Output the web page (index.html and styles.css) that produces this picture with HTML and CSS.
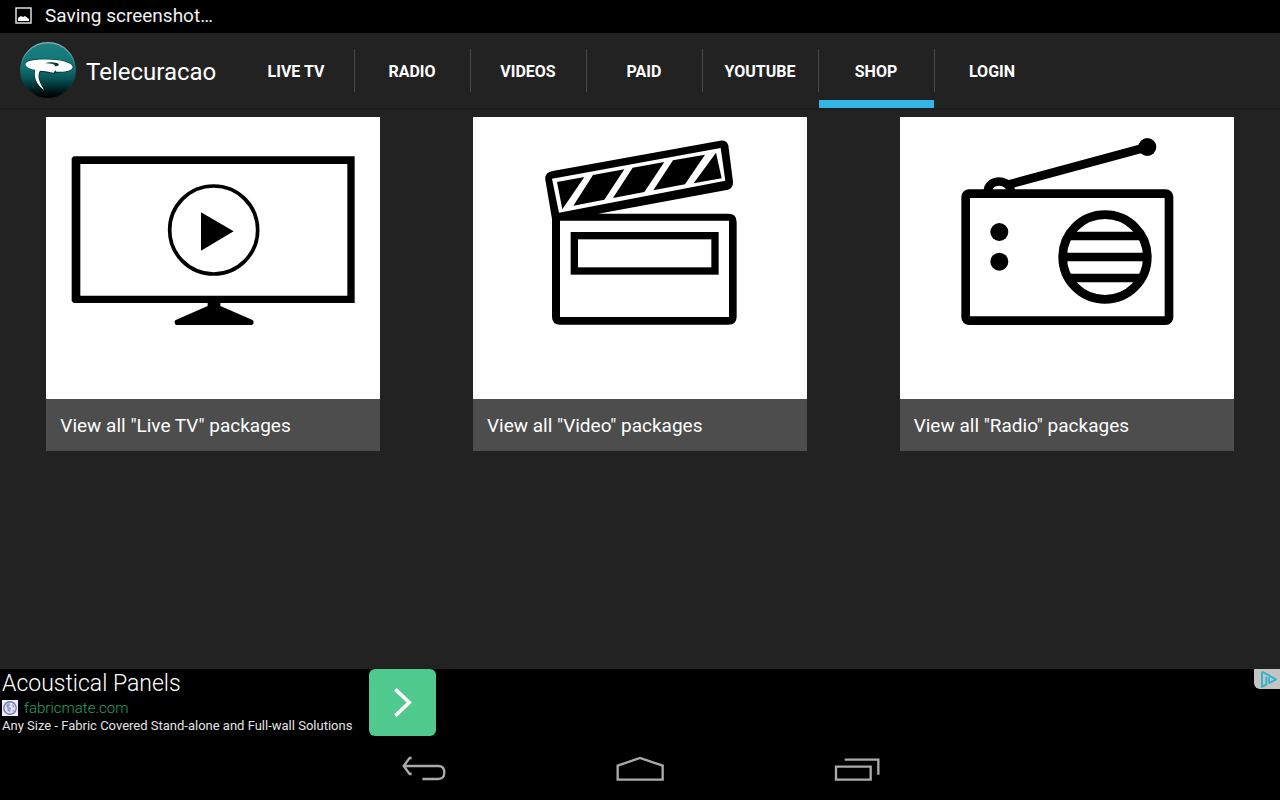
FILE: index.html
```html
<!DOCTYPE html>
<html lang="en">
<head>
<meta charset="utf-8">
<title>Telecuracao</title>
<meta name="viewport" content="width=device-width, initial-scale=1">
<link rel="stylesheet" href="styles.css">
</head>
<body>
<div class="status">
  <svg class="status-icon" viewBox="0 0 17 17" aria-hidden="true"><rect x="1" y="1" width="15" height="15" fill="none" stroke="#eee" stroke-width="1.4"/><path d="M3 14v-3l3-2 2 1 2-1 4 3v2z" fill="#fff"/></svg>
  <span>Saving screenshot…</span>
</div>
<header class="bar">
  <div class="brand">
    <svg class="logo" viewBox="0 0 168 168" aria-hidden="true">
      <defs>
        <linearGradient id="disc" x1="0" y1="0" x2="0" y2="1"><stop offset="0" stop-color="#1d7f80"/><stop offset=".45" stop-color="#0d7577"/><stop offset=".68" stop-color="#075052"/><stop offset=".9" stop-color="#011314"/><stop offset="1" stop-color="#000"/></linearGradient>
        <linearGradient id="rim" x1="0" y1="0" x2="0" y2="1"><stop offset="0" stop-color="#8fb5b8"/><stop offset=".4" stop-color="#20777a"/><stop offset=".8" stop-color="#053536"/><stop offset="1" stop-color="#000"/></linearGradient>
      </defs>
      <circle cx="84" cy="84" r="82" fill="url(#disc)" stroke="url(#rim)" stroke-width="4"/>
      <path d="M14 64C18 50 60 49 96 51C132 53 157 62 160 76C160 87 137 94 109 92L102 95C88 94 76 90 62 89C54 99 56 118 76 147C49 131 39 110 45 84C27 82 13 74 14 64Z" fill="#021b1c" opacity=".6"/>
      <path d="M16 65C20 53 60 51 96 53C132 55 156 63 158 75C158 86 135 91 109 89L106 85L101 92C89 90 76 86 60 86C52 98 54 117 73 144C49 127 41 107 46 83C29 81 15 74 16 65Z" fill="#fff"/>
      <path d="M74 64C86 58 112 60 116 66C118 70 112 73 104 73C108 67 95 65 74 64Z" fill="#063f42"/>
    </svg>
    <span class="title">Telecuracao</span>
  </div>
  <nav class="tabs" aria-label="Sections">
    <button class="tab" type="button">LIVE TV</button>
    <button class="tab" type="button">RADIO</button>
    <button class="tab" type="button">VIDEOS</button>
    <button class="tab" type="button">PAID</button>
    <button class="tab" type="button">YOUTUBE</button>
    <button class="tab tab-active" type="button" aria-current="page">SHOP</button>
    <button class="tab" type="button">LOGIN</button>
  </nav>
</header>
<main class="packages">
  <a class="card" href="#live-tv">
    <svg class="art" viewBox="19 21 1002 846" aria-hidden="true">
      <path fill-rule="evenodd" d="M102 139H945V579H102L96 573V145ZM122 162V557H923V162Z"/>
      <circle cx="522" cy="360" r="132" fill="none" stroke="#000" stroke-width="11"/>
      <path d="M484 307L582 364L484 422ZM504 575H542V588L637 629Q644 633 641 641L637 645H409Q404 641 405 634Q406 630 410 629L504 588Z"/>
    </svg>
    <span class="caption">View all "Live TV" packages</span>
  </a>
  <a class="card" href="#video">
    <svg class="art" viewBox="-171 21 1002 846" aria-hidden="true">
      <path d="M68 183L570 92Q590 89 595 106L609 215Q610 234 594 239L205 311H595Q620 311 620 336V620Q620 644 595 644H91Q66 644 66 620V327L46 209Q43 188 68 183Z"/>
      <path fill="#fff" d="M66 206L572 114L586 212L87 308ZM90 332H597V621H90Z"/>
      <path d="M81 216L163 201L97 298ZM189 195L283 178L223 269L130 287ZM308 173L403 156L343 246L249 264ZM429 151L525 134L465 223L370 241ZM558 128L575 205L491 220Z"/>
      <rect x="133" y="377" width="422" height="106" fill="none" stroke="#000" stroke-width="22"/>
    </svg>
    <span class="caption">View all "Video" packages</span>
  </a>
  <a class="card" href="#radio">
    <svg class="art" viewBox="-120 21 1002 846" aria-hidden="true">
      <g fill="none" stroke="#000" stroke-width="26">
        <rect x="77" y="251" width="610" height="381" rx="10"/>
        <path d="M143 246C145 204 209 204 213 246M205 224L622 111"/>
        <circle cx="495" cy="441" r="127"/>
        <path d="M387 378H603M370 441H620M387 504H603"/>
      </g>
      <circle cx="622" cy="111" r="27"/><circle cx="178" cy="366" r="27"/><circle cx="178" cy="455" r="27"/>
    </svg>
    <span class="caption">View all "Radio" packages</span>
  </a>
</main>
<aside class="ad">
  <div class="ad-text">
    <div class="ad-title">Acoustical Panels</div>
    <div class="ad-site">
      <svg class="favicon" viewBox="0 0 46 46" aria-hidden="true"><path fill="#eef" d="M0 0h46v46H0z"/><circle cx="23" cy="23" r="18" fill="#dfe3f5" stroke="#777bb0" stroke-width="4"/><path d="M10 15l10-7 4 7-5 4 7 5-3 11-7-4-1-9zM29 10l8 8-6 5zM31 28l5 3-6 5z" fill="#9da2ca"/></svg>
      <a class="ad-link" href="#ad">fabricmate.com</a>
    </div>
    <div class="ad-desc">Any Size - Fabric Covered Stand-alone and Full-wall Solutions</div>
  </div>
  <button class="ad-go" type="button" aria-label="Open ad"><svg class="chevron" viewBox="0 0 54 88" aria-hidden="true"><path d="M4 4L46 44L4 84" fill="none" stroke="#fff" stroke-width="11"/></svg></button>
  <button class="ad-choices" type="button" aria-label="Ad choices"><svg class="choices-icon" viewBox="0 0 78 60" aria-hidden="true"><path d="M24 8L66 31L44 43M24 8V54L37 46V23" fill="none" stroke="#35b3cd" stroke-width="6" stroke-linejoin="round"/><path d="M45 24V41M45 15v4" stroke="#35b3cd" stroke-width="5"/></svg></button>
</aside>
<footer class="system">
  <button class="sys" type="button" aria-label="Back"><svg class="sys-icon" viewBox="0 0 144 84" aria-hidden="true"><path d="M38 6h-6L14 30L32 54h6M14 30H118Q136 30 136 49Q136 69 118 69H70" fill="none" stroke="#aaa" stroke-width="7"/></svg></button>
  <button class="sys" type="button" aria-label="Home"><svg class="sys-icon" viewBox="0 0 144 84" aria-hidden="true"><path d="M5 29L72 6L140 29V71H5Z" fill="none" stroke="#aaa" stroke-width="7"/></svg></button>
  <button class="sys" type="button" aria-label="Recent apps"><svg class="sys-icon" viewBox="0 0 144 84" aria-hidden="true"><path d="M9 32H113V71H9ZM35 11H136V56" fill="none" stroke="#aaa" stroke-width="7"/></svg></button>
</footer>
</body>
</html>
```
FILE: styles.css
```css
* { box-sizing: border-box; }

body {
  margin: 0;
  min-height: 100vh;
  display: flex;
  flex-direction: column;
  background: #222;
  color: #fff;
  font-family: Roboto, "Noto Sans", sans-serif;
}

button {
  border: 0;
  padding: 0;
  background: none;
  color: inherit;
  font: inherit;
  cursor: pointer;
}

svg { display: block; flex: none; }

.status {
  display: flex;
  align-items: center;
  gap: 13px;
  height: 33px;
  padding: 0 15px 2px;
  background: #000;
  color: #f0f0f0;
  font-size: 19px;
}
.status-icon { width: 17px; height: 17px; }

.bar {
  display: flex;
  height: 75px;
  box-shadow: 0 1px 2px #191919;
}
.brand {
  display: flex;
  align-items: center;
  gap: 10px;
  width: 239px;
  padding: 0 0 2px 20px;
}
.logo { width: 56px; height: 56px; }
.title { padding-top: 4px; font-size: 24px; }

.tabs { display: flex; }
.tab {
  display: flex;
  align-items: center;
  justify-content: center;
  width: 116px;
  padding: 2px 2px 0 0;
  font-size: 16px;
  font-weight: 700;
  background: linear-gradient(#484848, #484848) right 16px / 1px 43px no-repeat;
}
.tab:last-child { background: none; }
.tab-active {
  background:
    linear-gradient(#484848, #484848) right 16px / 1px 43px no-repeat,
    linear-gradient(#33b5e5, #33b5e5) left bottom / 115px 8px no-repeat;
}

.packages {
  flex: 1;
  display: grid;
  grid-template-columns: repeat(3, 1fr);
  align-items: start;
  justify-items: center;
  padding-top: 9px;
}
.card {
  width: 100%;
  max-width: 334px;
  background: #fff;
  color: #fff;
  text-decoration: none;
}
.art { width: 100%; height: auto; }
.caption {
  display: block;
  padding: 15px 14px 13px;
  background: #4d4d4d;
  font-size: 19px;
  line-height: 24px;
}

.ad {
  display: flex;
  align-items: flex-start;
  height: 71px;
  background: #000;
}
.ad-text {
  min-width: 369px;
  padding: 1px 0 0 2px;
  white-space: nowrap;
}
.ad-title { font-size: 23px; font-weight: 300; line-height: 28px; }
.ad-site { display: flex; align-items: center; gap: 6px; height: 20px; }
.favicon { width: 16px; height: 16px; }
.ad-link { color: #22a06b; font-size: 15px; font-weight: 300; text-decoration: none; }
.ad-desc { color: #e4e4e4; font-size: 13px; line-height: 16px; }
.ad-go {
  display: flex;
  align-items: center;
  justify-content: center;
  width: 67px;
  height: 67px;
  border-radius: 6px;
  background: #50c98e;
}
.chevron { width: 18px; height: 29px; }
.ad-choices {
  margin-left: auto;
  border-radius: 0 0 0 6px;
  background: #c4c4c4;
}
.choices-icon { width: 26px; height: 20px; }

.system {
  display: flex;
  align-items: center;
  justify-content: center;
  gap: 169px;
  height: 60px;
  background: #000;
}
.sys-icon { width: 48px; height: 28px; }
```
